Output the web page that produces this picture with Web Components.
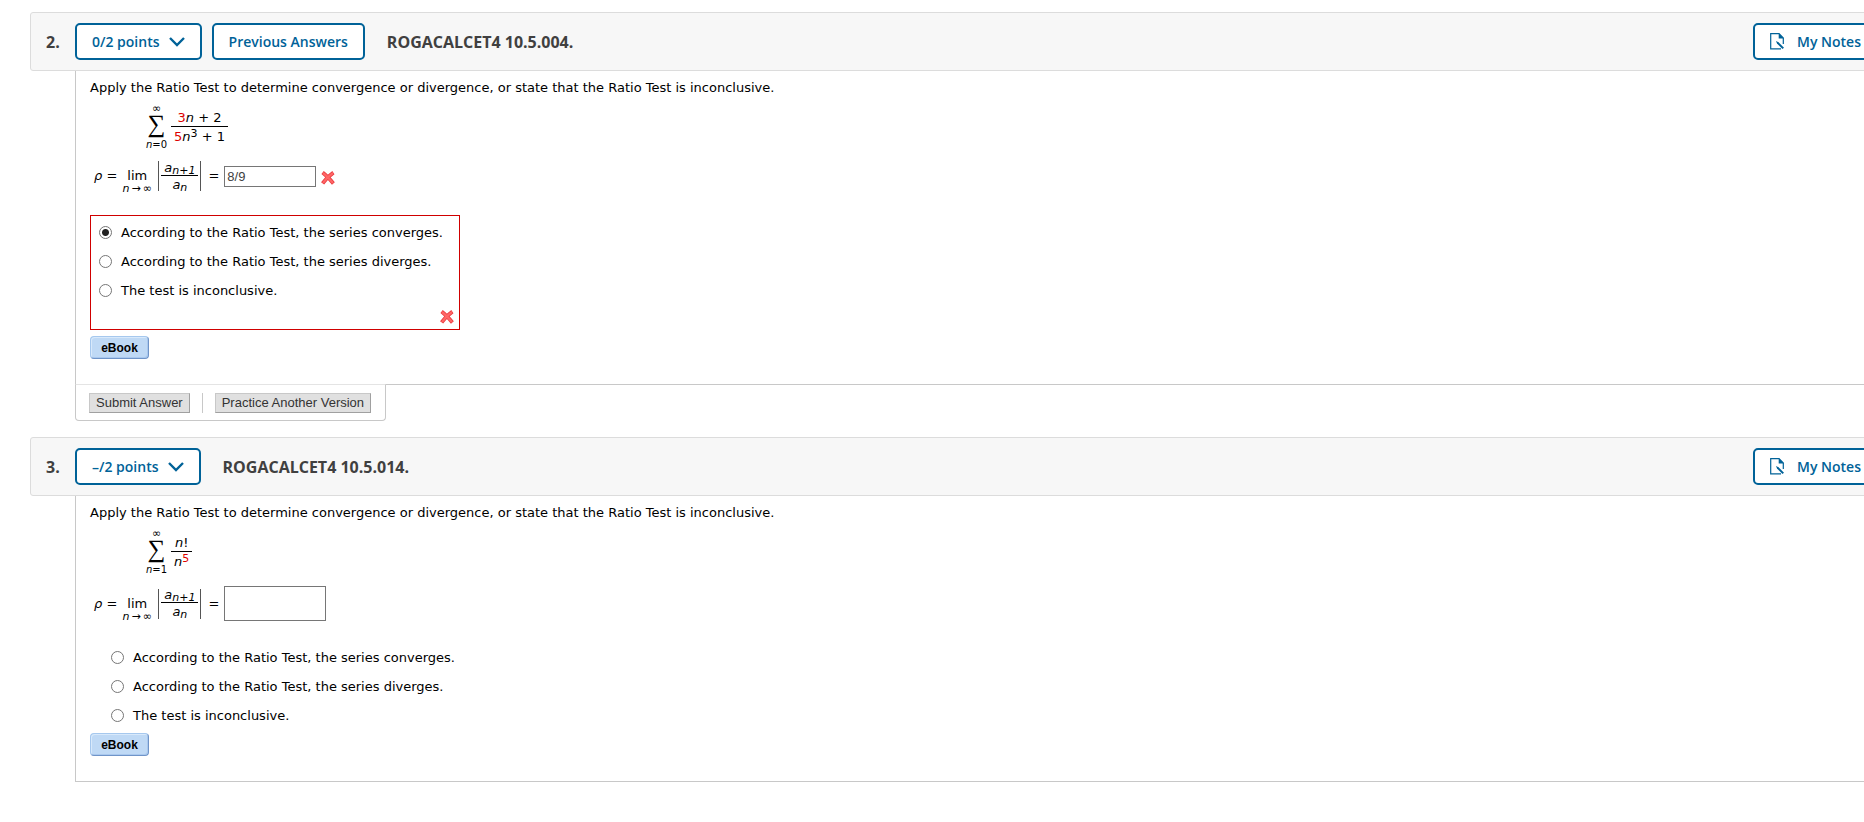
<!DOCTYPE html>
<html lang="en">
<head>
<meta charset="utf-8">
<title>Homework</title>
<style>
  body {
    margin: 0;
    padding: 12px 0 0 30px;
    overflow-x: hidden;
    background: #fff;
    color: #000;
    font: 13px/16px Verdana, "DejaVu Sans", sans-serif;
  }
  b.red {
    color: #d00;
    font-weight: normal;
  }
</style>
</head>
<body>
<question-block number="2." name="ROGACALCET4 10.5.004.">
  <outline-button slot="tools" icon="chevron">0/2 points</outline-button>
  <outline-button slot="tools">Previous Answers</outline-button>
  <question-prompt>Apply the Ratio Test to determine convergence or divergence, or state that the Ratio Test is inconclusive.</question-prompt>
  <series-sum start="0">
    <math-frac>
      <span slot="top"><b class="red">3</b><i>n</i> + 2</span>
      <span slot="bottom"><b class="red">5</b><i>n</i><math-script>3</math-script> + 1</span>
    </math-frac>
  </series-sum>
  <ratio-limit><answer-box value="8/9" graded></answer-box><wrong-mark></wrong-mark></ratio-limit>
  <choice-list name="q2" checked="0" graded></choice-list>
  <ebook-button>eBook</ebook-button>
  <submit-tab slot="actions"></submit-tab>
</question-block>

<question-block number="3." name="ROGACALCET4 10.5.014.">
  <outline-button slot="tools" icon="chevron">–/2 points</outline-button>
  <question-prompt>Apply the Ratio Test to determine convergence or divergence, or state that the Ratio Test is inconclusive.</question-prompt>
  <series-sum start="1">
    <math-frac>
      <span slot="top"><i>n</i>!</span>
      <span slot="bottom"><i>n</i><math-script><b class="red">5</b></math-script></span>
    </math-frac>
  </series-sum>
  <ratio-limit><answer-box></answer-box></ratio-limit>
  <choice-list name="q3"></choice-list>
  <ebook-button>eBook</ebook-button>
</question-block>

<script>
// attaches an open shadow root filled with the class's template
class BaseElement extends HTMLElement {
  connectedCallback() {
    if (this.shadowRoot) return;
    const template = document.createElement('template');
    template.innerHTML = this.template().trim();
    this.attachShadow({ mode: 'open' });
    this.shadowRoot.appendChild(template.content.cloneNode(true));
  }

  attr(name) {
    return this.getAttribute(name) || '';
  }
}

class QuestionBlock extends BaseElement {
  template() {
    return `
      <style>
        :host {
          display: block;
          margin: 0 -30px 16px 0;
        }
        header {
          display: flex;
          align-items: center;
          height: 57px;
          border: 1px solid #dcdcdc;
          border-radius: 3px;
          background: #f7f7f7;
          color: #404040;
          font: 600 16px/22px "Open Sans", sans-serif;
        }
        .number {
          box-sizing: border-box;
          width: 44px;
          padding-left: 15px;
          font-weight: 700;
        }
        .tools {
          display: flex;
          gap: 10px;
        }
        h2 {
          flex: 1;
          margin: 0 0 0 22px;
          font: inherit;
          font-weight: 700;
        }
        .notes {
          margin-right: 15px;
        }
        .content {
          display: flow-root;
          margin-left: 45px;
          padding: 9px 14px 25px;
          border-left: 1px solid #c8c8c8;
          border-bottom: 1px solid #c8c8c8;
        }
        .actions {
          margin-left: 45px;
        }
      </style>
      <header>
        <span class="number">${this.attr('number')}</span>
        <div class="tools"><slot name="tools"></slot></div>
        <h2>${this.attr('name')}</h2>
        <outline-button class="notes" icon="note">My Notes</outline-button>
      </header>
      <div class="content"><slot></slot></div>
      <div class="actions"><slot name="actions"></slot></div>
    `;
  }
}

class OutlineButton extends BaseElement {
  template() {
    const icon = this.attr('icon');
    const chevron = `
      <svg width="16" height="10" viewBox="0 0 16 10">
        <path d="M1 1 L8 8 L15 1" fill="none" stroke="#006298" stroke-width="2.4" />
      </svg>`;
    const note = `
      <svg width="15" height="17" viewBox="0 0 15 17">
        <path d="M13.3 11 V5 L9 .7 H.7 V15.8 H11" fill="none" stroke="#006298" stroke-width="1.2" />
        <path d="M8.7 0 V5.4 H14 Z" fill="#006298" />
        <path d="M6 8 L7 10.5 L12.5 16 L14 14.8 L8.5 9.3 Z" fill="#006298" />
      </svg>`;
    return `
      <style>
        :host { display: block; }
        button {
          display: flex;
          align-items: center;
          gap: 9px;
          height: 37px;
          padding: 0 15px;
          border: 2px solid #006298;
          border-radius: 5px;
          background: #fff;
          color: #006298;
          font: 600 14px/20px "Open Sans", sans-serif;
          white-space: nowrap;
        }
        :host([icon="note"]) button { gap: 12px; }
      </style>
      <button type="button">${icon === 'note' ? note : ''}<slot></slot>${icon === 'chevron' ? chevron : ''}</button>
    `;
  }
}

class QuestionPrompt extends BaseElement {
  template() {
    return `
      <style>
        :host { display: block; }
      </style>
      <slot></slot>
    `;
  }
}

class MathFrac extends BaseElement {
  template() {
    return `
      <style>
        :host {
          display: inline-flex;
          flex-direction: column;
          text-align: center;
          white-space: nowrap;
        }
        .top {
          padding: 0 3px;
          border-bottom: 1px solid #000;
        }
        .bottom {
          padding: 2px 3px 0;
        }
      </style>
      <div class="top"><slot name="top"></slot></div>
      <div class="bottom"><slot name="bottom"></slot></div>
    `;
  }
}

// no whitespace around the slot: it would show as a gap before the script
class MathScript extends BaseElement {
  template() {
    return `<style>
        :host {
          font-size: 11px;
          line-height: 0;
          vertical-align: 4px;
        }
        :host([sub]) {
          vertical-align: -2px;
        }
      </style><slot></slot>`;
  }
}

class SeriesSum extends BaseElement {
  template() {
    return `
      <style>
        :host {
          display: flex;
          align-items: center;
          gap: 4px;
          margin: 7px 0 0 56px;
        }
        .sum {
          display: flex;
          flex-direction: column;
          align-items: center;
          width: 21px;
          font-size: 10px;
          line-height: 12px;
        }
        .top { font-size: 11px; }
        .sigma {
          padding-bottom: 6px;
          font: 25px/18px "Liberation Serif", serif;
        }
      </style>
      <div class="sum">
        <span class="top">∞</span>
        <span class="sigma">∑</span>
        <span><i>n</i>=${this.attr('start')}</span>
      </div>
      <slot></slot>
    `;
  }
}

class RatioLimit extends BaseElement {
  template() {
    return `
      <style>
        :host {
          display: flex;
          align-items: center;
          min-height: 30px;
          margin: 10px 0 0 4px;
        }
        .lim {
          display: flex;
          flex-direction: column;
          align-items: center;
          box-sizing: border-box;
          width: 30px;
          height: 30px;
          margin: 0 6px 0 5px;
          padding-top: 8px;
          line-height: 14px;
        }
        small {
          display: flex;
          gap: 2px;
          font-size: 11px;
          line-height: 11px;
        }
        .abs {
          display: flex;
          align-items: center;
          height: 30px;
          padding: 0 2px;
          border: solid #555;
          border-width: 0 1px;
          line-height: 14px;
        }
        .eq { margin: 0 5px 0 7px; }
        ::slotted(wrong-mark) { margin: 4px 0 0 5px; }
      </style>
      <span><i>ρ</i> =</span>
      <span class="lim"><span>lim</span><small><i>n</i><span>→</span><span>∞</span></small></span>
      <span class="abs">
        <math-frac>
          <i slot="top">a<math-script sub>n+1</math-script></i>
          <i slot="bottom">a<math-script sub>n</math-script></i>
        </math-frac>
      </span>
      <span class="eq">=</span>
      <slot></slot>
    `;
  }
}

class AnswerBox extends BaseElement {
  template() {
    return `
      <style>
        :host { display: block; }
        input {
          display: block;
          box-sizing: border-box;
          width: 102px;
          height: 35px;
          padding: 0 2px;
          border: 1px solid #767676;
          background: #fff;
          color: #404040;
          font: 13px/16px "Liberation Sans", Arial, sans-serif;
        }
        :host([graded]) input {
          width: 92px;
          height: 21px;
        }
      </style>
      <input type="text" aria-label="Value of the limit" value="${this.attr('value')}">
    `;
  }
}

class WrongMark extends BaseElement {
  template() {
    return `
      <style>
        :host { display: block; }
        svg { display: block; }
      </style>
      <svg width="14" height="14" viewBox="0 0 14 14" role="img" aria-label="Incorrect">
        <path d="M1.6 1.6 Q6 5 12.4 12.4 M12.4 1.6 Q6 6 1.6 12.4" fill="none" stroke="#e8383d" stroke-width="3.8" />
        <path d="M2 2 Q6 5 12 12 M12 2 Q6 6 2 12" fill="none" stroke="#ff6666" stroke-width="2.2" />
      </svg>
    `;
  }
}

class ChoiceList extends BaseElement {
  template() {
    const graded = this.hasAttribute('graded');
    const choices = [
      'According to the Ratio Test, the series converges.',
      'According to the Ratio Test, the series diverges.',
      'The test is inconclusive.'
    ];
    const rows = choices.map((choice, i) => `
      <label>
        <input type="radio" name="${this.attr('name')}" ${this.attr('checked') === String(i) ? 'checked' : ''}>
        ${choice}
      </label>`).join('');
    return `
      <style>
        :host {
          display: block;
          width: fit-content;
          margin-top: 22px;
          padding-left: 21px;
        }
        :host([graded]) {
          margin: 24px 0 6px;
          padding: 2px 5px 0 8px;
          border: 1px solid #d00000;
        }
        label {
          display: flex;
          align-items: center;
          gap: 9px;
          height: 29px;
          padding-right: 11px;
        }
        input {
          appearance: none;
          box-sizing: border-box;
          width: 13px;
          height: 13px;
          margin: 0;
          border: 1px solid #767676;
          border-radius: 50%;
          background: #fff;
        }
        input:checked {
          background: radial-gradient(circle, #222 3px, #fff 4px);
        }
        .mark {
          display: flex;
          justify-content: flex-end;
          align-items: center;
          height: 24px;
        }
      </style>
      ${rows}
      ${graded ? '<div class="mark"><wrong-mark></wrong-mark></div>' : ''}
    `;
  }
}

class EbookButton extends BaseElement {
  template() {
    return `
      <style>
        :host {
          display: block;
          margin-top: 3px;
        }
        button {
          display: block;
          width: 59px;
          height: 23px;
          padding: 0;
          border: 1px solid;
          border-color: #a6c8ee #6f94c8 #6f94c8 #a6c8ee;
          border-radius: 4px;
          background: #bfd9f5;
          box-shadow: inset 1px 1px #d8e9fb, inset -1px -1px #a9c8ee;
          color: #000;
          font: bold 12px/16px "Liberation Sans", Arial, sans-serif;
        }
      </style>
      <button type="button"><slot></slot></button>
    `;
  }
}

class SubmitTab extends BaseElement {
  template() {
    return `
      <style>
        :host {
          display: flex;
          align-items: center;
          gap: 12px;
          box-sizing: border-box;
          width: fit-content;
          height: 37px;
          margin-top: -1px;
          padding: 0 14px 0 13px;
          border: 1px solid #c8c8c8;
          border-top-color: #e4e4e4;
          border-radius: 0 0 4px 4px;
          background: #fff;
        }
        button {
          height: 20px;
          padding: 0 6px;
          border: 1px solid;
          border-color: #c8c8c8 #a0a0a0 #a0a0a0 #c8c8c8;
          background: #e0e0e0;
          color: #333;
          font: 13px/16px "Liberation Sans", Arial, sans-serif;
        }
        .divider {
          width: 1px;
          height: 20px;
          background: #c8c8c8;
        }
      </style>
      <button type="submit">Submit Answer</button>
      <span class="divider"></span>
      <button type="button">Practice Another Version</button>
    `;
  }
}

customElements.define('wrong-mark', WrongMark);
customElements.define('math-script', MathScript);
customElements.define('math-frac', MathFrac);
customElements.define('outline-button', OutlineButton);
customElements.define('question-prompt', QuestionPrompt);
customElements.define('series-sum', SeriesSum);
customElements.define('answer-box', AnswerBox);
customElements.define('ratio-limit', RatioLimit);
customElements.define('choice-list', ChoiceList);
customElements.define('ebook-button', EbookButton);
customElements.define('submit-tab', SubmitTab);
customElements.define('question-block', QuestionBlock);
</script>
</body>
</html>
